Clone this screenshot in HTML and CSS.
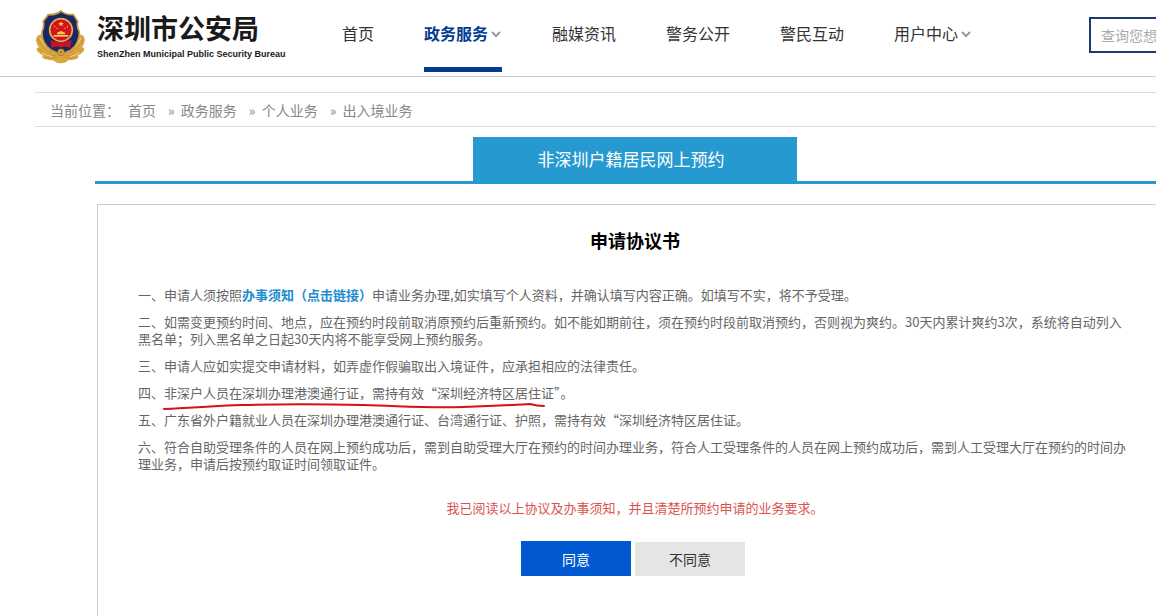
FILE: index.html
```html
<!DOCTYPE html>
<html lang="zh-CN">
<head>
    <meta charset="UTF-8">
    <meta name="viewport" content="width=device-width, initial-scale=1.0">
    <title>深圳市公安局 - 网上预约</title>
    <link rel="stylesheet" href="styles.css">
</head>
<body>
    <header class="header">
        <div class="wrap header-inner">
            <a class="logo" href="#">
                <svg class="emblem" viewBox="12 14 150 162" aria-hidden="true">
                    <!-- wheat wings -->
                    <path d="M34 86 Q14 88 15 106 Q18 120 25 126 Q15 126 17 135 Q24 146 36 150 Q30 156 40 161 Q58 165 66 165 Q76 174 90 174 Q104 174 112 165 Q124 165 138 160 Q146 156 140 150 Q154 146 159 135 Q161 126 153 126 Q160 118 161 106 Q162 88 144 86 Z" fill="#d8a740"/>
                    <path d="M21 100 Q35 134 62 143 M157 100 Q143 134 114 143 M24 132 Q46 154 74 151 M154 132 Q132 154 104 151 M42 156 Q62 160 78 155 M136 156 Q116 160 100 155" fill="none" stroke="#b98530" stroke-width="2"/>
                    <path d="M28 98 Q38 122 54 132 M149 98 Q140 122 124 132 M34 142 Q50 152 64 154 M144 142 Q130 152 116 154" fill="none" stroke="#f3d68b" stroke-width="3"/>
                    <!-- shield -->
                    <path d="M90 17 Q103 29 127 28 L140 48 Q136 62 145 80 Q145 116 120 134 L90 148 L60 134 Q32 116 33 80 Q41 62 37 48 L52 28 Q76 29 90 17 Z" fill="#1b2668" stroke="#c9993c" stroke-width="5"/>
                    <circle cx="90" cy="74" r="34" fill="#d3141e" stroke="#e0b04a" stroke-width="5"/>
                    <path d="M59 104 Q90 118 121 104 L118 128 Q103 119 90 127 Q77 119 62 128 Z" fill="#c8141e"/>
                    <path d="M90 47 L92 53 L98 53 L94 57 L95 63 L90 59 L85 63 L86 57 L82 53 L88 53 Z" fill="#f5cf58"/>
                    <g fill="#f5cf58">
                        <circle cx="71" cy="64" r="2"/>
                        <circle cx="78" cy="69" r="2"/>
                        <circle cx="102" cy="69" r="2"/>
                        <circle cx="109" cy="64" r="2"/>
                        <path d="M78 82 L90 77 L102 82 V87 H78 Z"/>
                        <path d="M68 89 H112 V94 H68 Z"/>
                    </g>
                    <circle cx="90" cy="141" r="10" fill="#e0b04a" stroke="#a87420" stroke-width="3"/>
                    <circle cx="90" cy="141" r="4" fill="#a87420"/>
                </svg>
                <span class="logo-text">
                    <strong class="logo-cn">深圳市公安局</strong>
                    <span class="logo-en">ShenZhen Municipal Public Security Bureau</span>
                </span>
            </a>
            <nav class="nav">
                <a href="#">首页</a>
                <a class="active" href="#">政务服务<svg class="arrow" viewBox="0 0 14 10"><path d="M4 3 L8 7 L12 3"/></svg></a>
                <a href="#">融媒资讯</a>
                <a href="#">警务公开</a>
                <a href="#">警民互动</a>
                <a href="#">用户中心<svg class="arrow" viewBox="0 0 14 10"><path d="M4 3 L8 7 L12 3"/></svg></a>
            </nav>
            <input class="search" type="text" placeholder="查询您想" aria-label="搜索">
        </div>
    </header>

    <div class="wrap breadcrumb">
        <span>当前位置：</span>
        <a href="#">首页</a>
        <a href="#"><i>»</i> 政务服务</a>
        <a href="#"><i>»</i> 个人业务</a>
        <a href="#"><i>»</i> 出入境业务</a>
    </div>

    <main class="main">
        <div class="tabs">
            <h1 class="tab">非深圳户籍居民网上预约</h1>
        </div>

        <section class="agreement">
            <h2>申请协议书</h2>
            <p>一、申请人须按照<a class="notice" href="#">办事须知（点击链接）</a>申请业务办理,如实填写个人资料，并确认填写内容正确。如填写不实，将不予受理。</p>
            <p>二、如需变更预约时间、地点，应在预约时段前取消原预约后重新预约。如不能如期前往，须在预约时段前取消预约，否则视为爽约。30天内累计爽约3次，系统将自动列入黑名单；列入黑名单之日起30天内将不能享受网上预约服务。</p>
            <p>三、申请人应如实提交申请材料，如弄虚作假骗取出入境证件，应承担相应的法律责任。</p>
            <p class="marked">四、非深户人员在深圳办理港澳通行证，需持有效“深圳经济特区居住证”。
                <svg class="mark" viewBox="0 0 384 10" aria-hidden="true"><path d="M1 6 C30 5 45 3 80 2 S160 1 200 2 S260 5 300 4 S345 2 367 1 Q374 3 381 3"/></svg>
            </p>
            <p>五、广东省外户籍就业人员在深圳办理港澳通行证、台湾通行证、护照，需持有效“深圳经济特区居住证。</p>
            <p>六、符合自助受理条件的人员在网上预约成功后，需到自助受理大厅在预约的时间办理业务，符合人工受理条件的人员在网上预约成功后，需到人工受理大厅在预约的时间办理业务，申请后按预约取证时间领取证件。</p>

            <p class="confirm">我已阅读以上协议及办事须知，并且清楚所预约申请的业务要求。</p>
            <div class="buttons">
                <button class="btn agree" type="button">同意</button>
                <button class="btn disagree" type="button">不同意</button>
            </div>
        </section>
    </main>
</body>
</html>
```
FILE: styles.css
```css
* {
    box-sizing: border-box;
}
html {
    overflow-x: hidden;
}
body {
    margin: 0;
    min-width: 1270px;
    min-height: 100vh;
    display: flex;
    flex-direction: column;
    overflow-x: hidden;
    background: #fff;
    color: #666;
    font-family: "Noto Sans CJK SC", sans-serif;
    font-size: 13px;
}
a {
    color: inherit;
    text-decoration: none;
}
.wrap {
    width: 1200px;
    margin: 0 auto;
}

/* Header */
.header {
    border-bottom: 1px solid #ccc;
}
.header-inner {
    display: flex;
    height: 76px;
}
.logo {
    display: flex;
    width: 307px;
    padding-top: 10px;
    color: #1a1a1a;
}
.emblem {
    width: 50px;
    height: 54px;
    margin-right: 12px;
}
.logo-text {
    display: flex;
    flex-direction: column;
}
.logo-cn {
    font-size: 27px;
    line-height: 36px;
}
.logo-en {
    font: bold 9px/16px "Liberation Sans", Arial, sans-serif;
    white-space: nowrap;
}
.nav {
    display: flex;
    gap: 50px;
    height: 72px;
}
.nav a {
    display: flex;
    align-items: center;
    padding-bottom: 1px;
    border-bottom: 5px solid transparent;
    font-size: 16px;
    color: #333;
}
.nav a.active {
    color: #003c90;
    font-weight: bold;
    border-bottom-color: #003c90;
}
.arrow {
    width: 14px;
    height: 10px;
    margin-top: 2px;
    fill: none;
    stroke: #999;
    stroke-width: 2;
}
.search {
    width: 146px;
    height: 36px;
    margin: 17px 0 0 auto;
    padding: 0 10px;
    border: 2px solid #1a3b72;
    font-family: inherit;
    font-size: 14px;
}
.search::placeholder {
    color: #aaa;
}

/* Breadcrumb */
.breadcrumb {
    display: flex;
    gap: 12px;
    margin-top: 15px;
    padding: 1px 0 0 15px;
    border-top: 1px solid #ddd;
    border-bottom: 1px solid #ddd;
    font-size: 14px;
    line-height: 32px;
    color: #888;
}
.breadcrumb span {
    margin-right: -4px;
}
.breadcrumb i {
    margin-right: 3px;
    font-style: normal;
}

/* Content */
.main {
    flex: 1;
    display: flex;
    flex-direction: column;
    width: 1080px;
    margin: 10px auto 0;
}
.tabs {
    border-bottom: 3px solid #2699d0;
}
.tab {
    width: 30%;
    margin: 0 auto;
    padding-right: 8px;
    background: #2699d0;
    color: #fff;
    font-size: 17px;
    font-weight: normal;
    line-height: 44px;
    text-align: center;
}
.agreement {
    flex: 1;
    margin: 20px 2px 0;
    padding: 23px 40px 40px;
    border: 1px solid #ccc;
    border-bottom: none;
}
.agreement h2 {
    margin: 0 0 34px;
    color: #000;
    font-size: 18px;
    line-height: 24px;
    text-align: center;
}
.agreement p {
    margin: 0 0 10px;
    line-height: 17px;
}
.notice {
    color: #1a8ccf;
    font-weight: bold;
}
.marked {
    position: relative;
}
.mark {
    position: absolute;
    left: 25px;
    top: 19px;
    width: 384px;
    height: 10px;
    fill: none;
    stroke: #d80f18;
    stroke-width: 2;
    stroke-linecap: round;
}
.agreement .confirm {
    margin: 27px 0 25px;
    color: #d9534f;
    text-align: center;
}
.buttons {
    display: flex;
    justify-content: center;
    align-items: flex-end;
    gap: 4px;
    padding-right: 4px;
}
.btn {
    width: 110px;
    height: 34px;
    padding: 0;
    border: none;
    font-family: inherit;
    font-size: 14px;
    cursor: pointer;
}
.agree {
    height: 35px;
    background: #0059d0;
    color: #fff;
}
.disagree {
    background: #e5e5e5;
    color: #333;
}
```
